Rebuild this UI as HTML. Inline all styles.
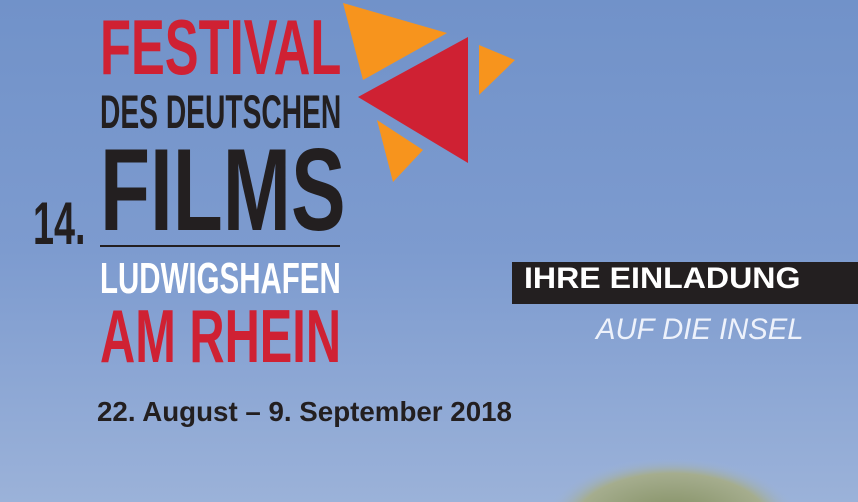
<!DOCTYPE html>
<html><head><meta charset="utf-8"><style>
*{margin:0;padding:0}
html,body{width:858px;height:502px;overflow:hidden}
body{position:relative;background:linear-gradient(180deg,#7192c9 0%,#7d9bcf 50%,#9bb2d9 100%);font-family:"Liberation Sans",sans-serif}
.t{position:absolute;white-space:nowrap;transform-origin:0 0;font-weight:bold;line-height:1}
</style></head><body>
<svg width="858" height="502" style="position:absolute;left:0;top:0">
<defs><radialGradient id="g" cx="50%" cy="55%" r="50%"><stop offset="0" stop-color="#7f8c5e"/><stop offset="0.75" stop-color="#a5ad8e"/><stop offset="1" stop-color="#9bb2d9" stop-opacity="0"/></radialGradient></defs>
<ellipse cx="672" cy="515" rx="128" ry="64" fill="url(#g)"/>
<polygon points="343,3 447,33 363,80" fill="#f7941d"/>
<polygon points="358,97 468,37 468,163" fill="#cf2133"/>
<polygon points="479,45 515,60 479,95" fill="#f7941d"/>
<polygon points="377,120 423,150 393,182" fill="#f7941d"/>
<rect x="100" y="245" width="240" height="2" fill="#231f20"/>
<rect x="512" y="262" width="346" height="42" fill="#231f20"/>
</svg>
<div class="t" style="left:100px;top:8px;font-size:78px;color:#cf2133;transform:scaleX(.65)">FESTIVAL</div>
<div class="t" style="left:100px;top:88px;font-size:47px;color:#231f20;transform:scaleX(.6)">DES DEUTSCHEN</div>
<div class="t" style="left:100px;top:131px;font-size:117px;color:#231f20;transform:scaleX(.7)">FILMS</div>
<div class="t" style="left:33px;top:194px;font-size:60px;color:#231f20;transform:scaleX(.63)">14.</div>
<div class="t" style="left:100px;top:257px;font-size:44px;color:#fff;transform:scaleX(.67)">LUDWIGSHAFEN</div>
<div class="t" style="left:100px;top:299px;font-size:75px;color:#cf2133;transform:scaleX(.65)">AM RHEIN</div>
<div class="t" style="left:97px;top:398px;font-size:28px;color:#231f20;transform:scaleX(.99)">22. August – 9. September 2018</div>
<div class="t" style="left:524px;top:264px;font-size:30px;color:#fff;transform:scaleX(1.07)">IHRE EINLADUNG</div>
<div class="t" style="left:596px;top:315px;font-size:30px;color:#eef2fb;font-weight:normal;font-style:italic;transform:scaleX(.975)">AUF DIE INSEL</div>
</body></html>
